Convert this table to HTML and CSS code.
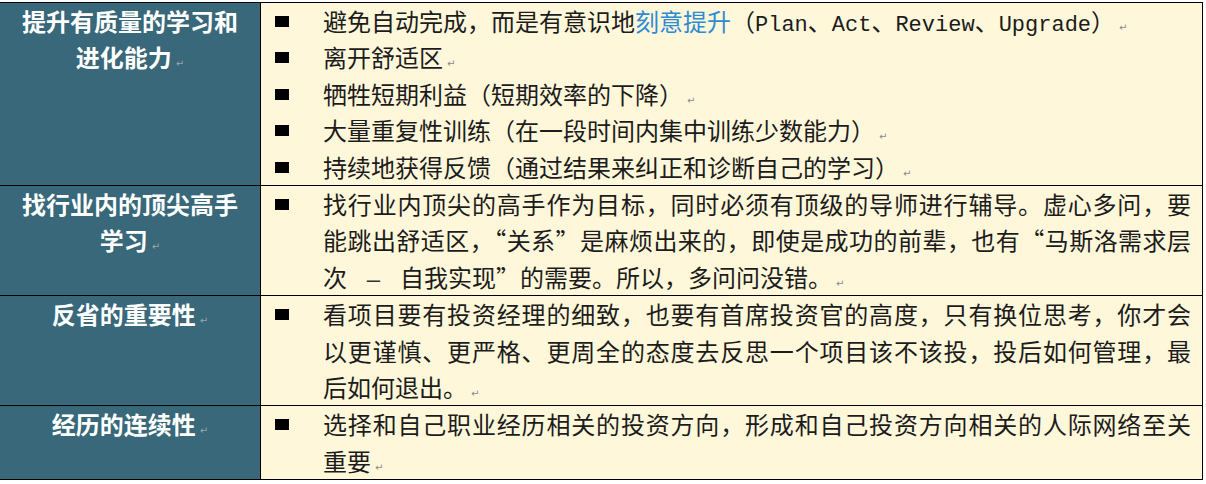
FILE: index.html
```html
<!DOCTYPE html>
<html lang="zh-CN">
<head>
<meta charset="utf-8">
<title>学习与能力</title>
<link rel="stylesheet" href="styles.css">
</head>
<body>
<div class="tbl">
  <div class="row">
    <div class="head">提升有质量的学习和<br>进化能力<span class="pm">↵</span></div>
    <div class="body">
      <div class="item"><span class="bul"></span><div class="txt"><span class="ln last">避免自动完成，而是有意识地<span class="blue">刻意提升</span>（<span class="lat">Plan</span>、<span class="lat">Act</span>、<span class="lat">Review</span>、<span class="lat">Upgrade</span>）<span class="pm">↵</span></span></div></div>
      <div class="item"><span class="bul"></span><div class="txt"><span class="ln last">离开舒适区<span class="pm">↵</span></span></div></div>
      <div class="item"><span class="bul"></span><div class="txt"><span class="ln last">牺牲短期利益（短期效率的下降）<span class="pm">↵</span></span></div></div>
      <div class="item"><span class="bul"></span><div class="txt"><span class="ln last">大量重复性训练（在一段时间内集中训练少数能力）<span class="pm">↵</span></span></div></div>
      <div class="item"><span class="bul"></span><div class="txt"><span class="ln last">持续地获得反馈（通过结果来纠正和诊断自己的学习）<span class="pm">↵</span></span></div></div>
    </div>
  </div>
  <div class="row">
    <div class="head">找行业内的顶尖高手<br>学习<span class="pm">↵</span></div>
    <div class="body">
      <div class="item"><span class="bul"></span><div class="txt">
        <span class="ln">找行业内顶尖的高手作为目标，同时必须有顶级的导师进行辅导。虚心多问，要</span>
        <span class="ln">能跳出舒适区，“关系”是麻烦出来的，即使是成功的前辈，也有“马斯洛需求层</span>
        <span class="ln last">次<span class="dash">–</span>自我实现”的需要。所以，多问问没错。<span class="pm">↵</span></span>
      </div></div>
    </div>
  </div>
  <div class="row">
    <div class="head">反省的重要性<span class="pm">↵</span></div>
    <div class="body">
      <div class="item"><span class="bul"></span><div class="txt">
        <span class="ln">看项目要有投资经理的细致，也要有首席投资官的高度，只有换位思考，你才会</span>
        <span class="ln">以更谨慎、更严格、更周全的态度去反思一个项目该不该投，投后如何管理，最</span>
        <span class="ln last">后如何退出。<span class="pm">↵</span></span>
      </div></div>
    </div>
  </div>
  <div class="row">
    <div class="head">经历的连续性<span class="pm">↵</span></div>
    <div class="body">
      <div class="item"><span class="bul"></span><div class="txt">
        <span class="ln">选择和自己职业经历相关的投资方向，形成和自己投资方向相关的人际网络至关</span>
        <span class="ln last">重要<span class="pm">↵</span></span>
      </div></div>
    </div>
  </div>
</div>
</body>
</html>
```
FILE: styles.css
```css
html, body {
  margin: 0;
  padding: 0;
  background: #ffffff;
}

body {
  font-family: "Noto Sans CJK SC", "Noto Sans", sans-serif;
  font-size: 24px;
  line-height: 36.4px;
  color: #1c1c1c;
}

.tbl {
  margin-top: 2px;
  width: 1203px;
  border-top: 1px solid #000;
  border-right: 1px solid #000;
  box-sizing: border-box;
}

.row {
  display: flex;
  border-bottom: 1px solid #000;
}

.head {
  width: 261px;
  flex: none;
  box-sizing: border-box;
  border-right: 1px solid #000;
  background: #386879;
  color: #ffffff;
  font-weight: bold;
  text-align: center;
  padding: 0 12px;
}

.head .pm {
  color: #9aa7ad;
}

.body {
  flex: 1;
  background: #fef7da;
  padding: 0 11px 0 14px;
}

.item {
  display: flex;
  align-items: flex-start;
}

.bul {
  flex: none;
  width: 14px;
  height: 11px;
  background: #000;
  margin: 13px 34px 0 0;
}

.txt {
  flex: 1;
  min-width: 0;
}

.ln {
  display: block;
  text-align: justify;
  text-align-last: justify;
  white-space: nowrap;
}

.ln.last {
  text-align: left;
  text-align-last: left;
}

.blue {
  color: #2f8ad3;
}

.lat {
  font-family: "Liberation Mono", monospace;
  font-size: 22px;
  line-height: 1;
}

.dash {
  display: inline-block;
  width: 53px;
  text-align: center;
  text-align-last: center;
  font-family: "Liberation Sans", sans-serif;
  line-height: 1;
  color: #333;
}

.pm {
  font-family: "DejaVu Sans", sans-serif;
  font-size: 10px;
  line-height: 1;
  font-weight: normal;
  color: #8a8a8a;
  margin-left: 4px;
}
```
